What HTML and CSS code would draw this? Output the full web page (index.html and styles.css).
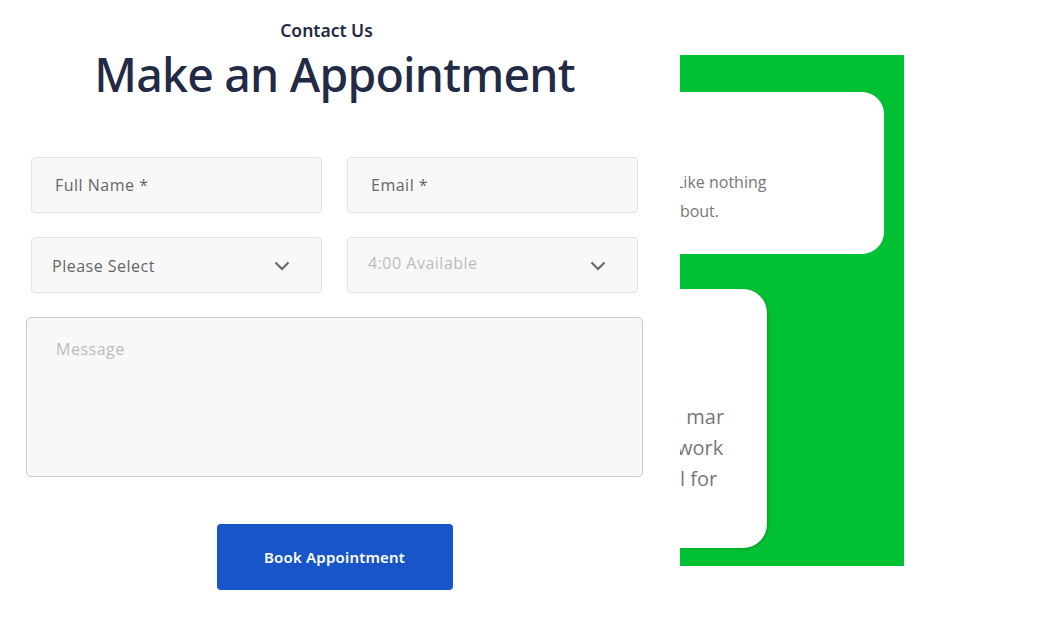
FILE: index.html
```html
<!DOCTYPE html>
<html lang="en">
<head>
<meta charset="utf-8">
<title>Make an Appointment</title>
<link rel="stylesheet" href="styles.css">
</head>
<body>
<main class="page">
  <section class="contact">
    <p class="eyebrow">Contact Us</p>
    <h1 class="title">Make an Appointment</h1>
    <form class="form">
      <div class="row">
        <div class="field"><span class="label">Full Name *</span></div>
        <div class="field"><span class="label">Email *</span></div>
      </div>
      <div class="row">
        <div class="field select"><span class="label label-select">Please Select</span>
          <svg class="chev" width="16" height="10" viewBox="0 0 16 10"><path d="M1.5 1.5 8 8l6.5-6.5" fill="none" stroke="#666" stroke-width="2"/></svg>
        </div>
        <div class="field select"><span class="label placeholder label-time">4:00 Available</span>
          <svg class="chev" width="16" height="10" viewBox="0 0 16 10"><path d="M1.5 1.5 8 8l6.5-6.5" fill="none" stroke="#666" stroke-width="2"/></svg>
        </div>
      </div>
      <div class="message"><span class="placeholder">Message</span></div>
      <div class="actions">
        <button type="button" class="btn">Book Appointment</button>
      </div>
    </form>
  </section>
  <aside class="panel">
    <div class="card card-top">
      <div class="card-text small">
        <span class="line l1">Like nothing</span>
        <span class="line l2">about.</span>
      </div>
    </div>
    <div class="card card-bottom">
      <div class="card-text large">
        <span class="line l3">a mar</span>
        <span class="line l4">work</span>
        <span class="line l5">al for</span>
      </div>
    </div>
  </aside>
</main>
</body>
</html>
```
FILE: styles.css
```css
* { box-sizing: border-box; }
body {
  margin: 0;
  background: #fff;
  font-family: "Open Sans", "Liberation Sans", sans-serif;
}
.page {
  display: flex;
  gap: 37px;
  padding-left: 26px;
  width: 1039px;
  height: 621px;
  overflow: hidden;
}
.contact {
  width: 617px;
  flex: none;
  display: flex;
  flex-direction: column;
  align-items: center;
}
.eyebrow {
  margin: 18px 0 0;
  font-family: "Noto Sans", sans-serif;
  font-size: 17.5px;
  line-height: 24px;
  font-weight: 600;
  color: #232a45;
  transform: translateX(-8px);
}
.title {
  margin: 4px 0 0;
  font-family: "Noto Sans", sans-serif;
  font-size: 46.5px;
  line-height: 56px;
  font-weight: 500;
  color: #232a45;
  letter-spacing: -0.8px;
}
.form {
  width: 100%;
  margin-top: 55px;
  display: flex;
  flex-direction: column;
  gap: 24px;
}
.row {
  display: flex;
  gap: 25px;
  padding: 0 5px;
}
.field {
  flex: 1;
  height: 56px;
  background: #f8f8f8;
  border: 1px solid #e3e3e3;
  border-radius: 4px;
  display: flex;
  align-items: center;
  justify-content: space-between;
  padding: 0 31px 0 23px;
}
.label {
  font-family: "Open Sans", sans-serif;
  font-size: 16px;
  color: #666;
  letter-spacing: 0.5px;
}
.label-select { margin-left: -3px; margin-top: 2px; }
.label-time { margin-left: -3px; margin-top: -4px; }
.placeholder { color: #bcbcbc; }
.chev { margin-top: 2px; }
.message {
  height: 160px;
  background: #f8f8f8;
  border: 1px solid #cbcbcb;
  border-radius: 5px;
  padding: 20px 29px;
  font-size: 16px;
  letter-spacing: 0.5px;
}
.actions {
  display: flex;
  justify-content: center;
  margin-top: 23px;
}
.btn {
  width: 236px;
  height: 66px;
  border: none;
  border-radius: 4px;
  background: #1855c9;
  color: #fff;
  font-family: "Noto Sans", sans-serif;
  font-size: 15px;
  font-weight: 600;
  letter-spacing: 0.2px;
}
.panel {
  flex: none;
  width: 224px;
  height: 511px;
  margin-top: 55px;
  background: #00c133;
  display: flex;
  flex-direction: column;
  overflow: hidden;
  padding: 37px 0 18px;
  gap: 35px;
}
.card {
  background: #fff;
  border-radius: 0 22px 22px 0;
  display: flex;
  flex-direction: column;
  justify-content: center;
  overflow: hidden;
}
.card-top { width: 204px; height: 162px; }
.card-bottom { width: 87px; flex: 1; border-radius: 0 24px 24px 0; box-shadow: 1px 1px 3px rgba(0,0,0,0.18); }
.card-text {
  display: flex;
  flex-direction: column;
  color: #777;
  font-family: "Open Sans", sans-serif;
  white-space: nowrap;
}
.small { font-size: 16px; line-height: 29px; margin-top: 48px; }
.large { font-size: 20px; line-height: 31px; margin-top: 58px; }
.line { display: block; }
.l1 { margin-left: -5px; }
.l2 { margin-left: -9px; }
.l3 { margin-left: -10px; }
.l4 { margin-left: -3px; }
.l5 { margin-left: -11px; }
```
